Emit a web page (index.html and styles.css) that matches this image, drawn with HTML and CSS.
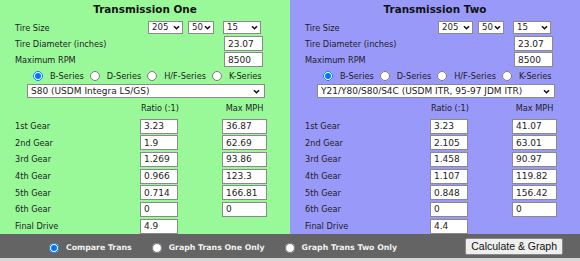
FILE: index.html
```html
<!DOCTYPE html>
<html lang="en">
<head>
    <meta charset="UTF-8">
    <title>Transmission Calculator</title>
    <link rel="stylesheet" href="styles.css">
</head>
<body>

    <form id="calc">
        <div class="panels">

            <!-- Transmission One -->
            <section class="panel one">
                <h2>Transmission One</h2>
                <div class="row">
                    <span>Tire Size</span>
                    <span class="tires">
                        <span class="sel w-width"><select><option>205</option></select><svg viewBox="0 0 8 6"><path d="M1 1.5 L4 4.5 L7 1.5"/></svg></span>
                        <span class="sel w-ratio"><select><option>50</option></select><svg viewBox="0 0 8 6"><path d="M1 1.5 L4 4.5 L7 1.5"/></svg></span>
                        <span class="sel w-rim"><select><option>15</option></select><svg viewBox="0 0 8 6"><path d="M1 1.5 L4 4.5 L7 1.5"/></svg></span>
                    </span>
                </div>
                <div class="row">
                    <span>Tire Diameter (inches)</span>
                    <input type="text" class="num" value="23.07">
                </div>
                <div class="row">
                    <span>Maximum RPM</span>
                    <input type="text" class="num" value="8500">
                </div>
                <div class="series">
                    <label><input type="radio" name="s1" checked>B-Series</label>
                    <label><input type="radio" name="s1">D-Series</label>
                    <label><input type="radio" name="s1">H/F-Series</label>
                    <label><input type="radio" name="s1">K-Series</label>
                </div>
                <span class="sel model"><select><option>S80 (USDM Integra LS/GS)</option></select><svg viewBox="0 0 8 6"><path d="M1 1.5 L4 4.5 L7 1.5"/></svg></span>
                <div class="gears">
                    <span></span><span class="head ratio-head">Ratio (:1)</span><span class="head">Max MPH</span>
                    <span>1st Gear</span><input type="text" class="ratio" value="3.23"><input type="text" class="mph" value="36.87">
                    <span>2nd Gear</span><input type="text" class="ratio" value="1.9"><input type="text" class="mph" value="62.69">
                    <span>3rd Gear</span><input type="text" class="ratio" value="1.269"><input type="text" class="mph" value="93.86">
                    <span>4th Gear</span><input type="text" class="ratio" value="0.966"><input type="text" class="mph" value="123.3">
                    <span>5th Gear</span><input type="text" class="ratio" value="0.714"><input type="text" class="mph" value="166.81">
                    <span>6th Gear</span><input type="text" class="ratio" value="0"><input type="text" class="mph" value="0">
                    <span>Final Drive</span><input type="text" class="ratio" value="4.9"><span></span>
                </div>
            </section>

            <!-- Transmission Two -->
            <section class="panel two">
                <h2>Transmission Two</h2>
                <div class="row">
                    <span>Tire Size</span>
                    <span class="tires">
                        <span class="sel w-width"><select><option>205</option></select><svg viewBox="0 0 8 6"><path d="M1 1.5 L4 4.5 L7 1.5"/></svg></span>
                        <span class="sel w-ratio"><select><option>50</option></select><svg viewBox="0 0 8 6"><path d="M1 1.5 L4 4.5 L7 1.5"/></svg></span>
                        <span class="sel w-rim"><select><option>15</option></select><svg viewBox="0 0 8 6"><path d="M1 1.5 L4 4.5 L7 1.5"/></svg></span>
                    </span>
                </div>
                <div class="row">
                    <span>Tire Diameter (inches)</span>
                    <input type="text" class="num" value="23.07">
                </div>
                <div class="row">
                    <span>Maximum RPM</span>
                    <input type="text" class="num" value="8500">
                </div>
                <div class="series">
                    <label><input type="radio" name="s2" checked>B-Series</label>
                    <label><input type="radio" name="s2">D-Series</label>
                    <label><input type="radio" name="s2">H/F-Series</label>
                    <label><input type="radio" name="s2">K-Series</label>
                </div>
                <span class="sel model"><select><option>Y21/Y80/S80/S4C (USDM ITR, 95-97 JDM ITR)</option></select><svg viewBox="0 0 8 6"><path d="M1 1.5 L4 4.5 L7 1.5"/></svg></span>
                <div class="gears">
                    <span></span><span class="head ratio-head">Ratio (:1)</span><span class="head">Max MPH</span>
                    <span>1st Gear</span><input type="text" class="ratio" value="3.23"><input type="text" class="mph" value="41.07">
                    <span>2nd Gear</span><input type="text" class="ratio" value="2.105"><input type="text" class="mph" value="63.01">
                    <span>3rd Gear</span><input type="text" class="ratio" value="1.458"><input type="text" class="mph" value="90.97">
                    <span>4th Gear</span><input type="text" class="ratio" value="1.107"><input type="text" class="mph" value="119.82">
                    <span>5th Gear</span><input type="text" class="ratio" value="0.848"><input type="text" class="mph" value="156.42">
                    <span>6th Gear</span><input type="text" class="ratio" value="0"><input type="text" class="mph" value="0">
                    <span>Final Drive</span><input type="text" class="ratio" value="4.4"><span></span>
                </div>
            </section>
        </div>

        <!-- Mode bar -->
        <div class="modebar">
            <label><input type="radio" name="mode" checked>Compare Trans</label>
            <label><input type="radio" name="mode">Graph Trans One Only</label>
            <label><input type="radio" name="mode">Graph Trans Two Only</label>
            <button type="button">Calculate &amp; Graph</button>
        </div>
    </form>

</body>
</html>
```

FILE: styles.css
```css
/* Global Styles */
body {
    margin: 0;
    padding: 0;
    background-color: #d6d6d6;
    font-family: "DejaVu Sans", Verdana, sans-serif;
    font-size: 8.2px;
    color: #222;
}

#calc {
    width: 580px;
    margin: 0;
}

.panels {
    display: flex;
}

.panel {
    width: 290px;
    height: 234px;
    box-sizing: border-box;
}

.panel.one {
    background-color: #99f999;
}

.panel.two {
    background-color: #9999f9;
}

h2 {
    margin: 0 0 1px;
    height: 19px;
    line-height: 19px;
    text-align: center;
    font-size: 10.4px;
    font-weight: bold;
    color: #111;
}

input[type="text"],
select {
    font-family: "DejaVu Sans", Verdana, sans-serif;
    font-size: 9px;
    color: #222;
    background: #fff;
    box-sizing: border-box;
    margin: 0;
}

input[type="text"] {
    height: 15px;
    border: 1px solid #8a8a8a;
    padding: 0 3px;
}

/* select with a drawn arrow */
.sel {
    position: relative;
    display: inline-block;
    height: 13px;
}

.sel select {
    -webkit-appearance: none;
    appearance: none;
    width: 100%;
    height: 100%;
    padding: 0 0 0 3px;
    border: 1px solid #8a8a8a;
    border-radius: 0;
    line-height: 11px;
}

.sel svg {
    position: absolute;
    right: 3px;
    top: 50%;
    width: 7px;
    height: 5px;
    margin-top: -2.5px;
    pointer-events: none;
}

.sel path {
    fill: none;
    stroke: #111;
    stroke-width: 1.9;
}

.row {
    display: flex;
    justify-content: space-between;
    align-items: center;
    height: 15px;
    margin-bottom: 1px;
    padding: 0 27px 0 15px;
}

.tires {
    display: flex;
    margin-right: 2px;
}

.tires select {
    font-size: 8.6px;
}

.w-width { width: 35px; }
.w-ratio { width: 26px; margin-left: 5px; }
.w-rim { width: 38px; margin-left: 9px; }

.num {
    width: 39px;
}

.series {
    display: flex;
    align-items: center;
    height: 16px;
    padding-left: 33px;
}

.series label,
.modebar label {
    display: flex;
    align-items: center;
}

input[type="radio"] {
    width: 10px;
    height: 10px;
    margin: 0 7px 0 0;
}

.series label {
    margin-right: 6px;
}

.sel.model {
    display: block;
    width: 238px;
    height: 14px;
    margin: 0 0 0 27px;
}

.sel.model svg {
    right: 5px;
}

.gears {
    display: grid;
    grid-template-columns: 125px 82px 45px;
    grid-template-rows: 18px;
    grid-auto-rows: 15px;
    row-gap: 1.67px;
    align-items: center;
    padding-left: 15px;
    margin-top: 1px;
}

.gears .head {
    text-align: center;
    white-space: nowrap;
}

.gears .ratio-head {
    width: 40px;
}

.gears .ratio {
    width: 38px;
}

.gears .mph {
    width: 45px;
}

/* Mode bar */
.modebar {
    display: flex;
    align-items: center;
    height: 24px;
    background-color: #646464;
    padding-left: 49px;
    color: #f2f2f2;
    font-weight: bold;
    font-size: 7.8px;
}

.modebar label {
    margin-right: 20px;
    padding-top: 3px;
}

.modebar button {
    margin-left: 48px;
    width: 98px;
    height: 17px;
    padding: 0;
    font-family: "Liberation Sans", Arial, sans-serif;
    font-size: 10.5px;
    color: #111;
    background: #efefef;
    border: 1px solid #8a8a8a;
    border-radius: 2px;
}
```
